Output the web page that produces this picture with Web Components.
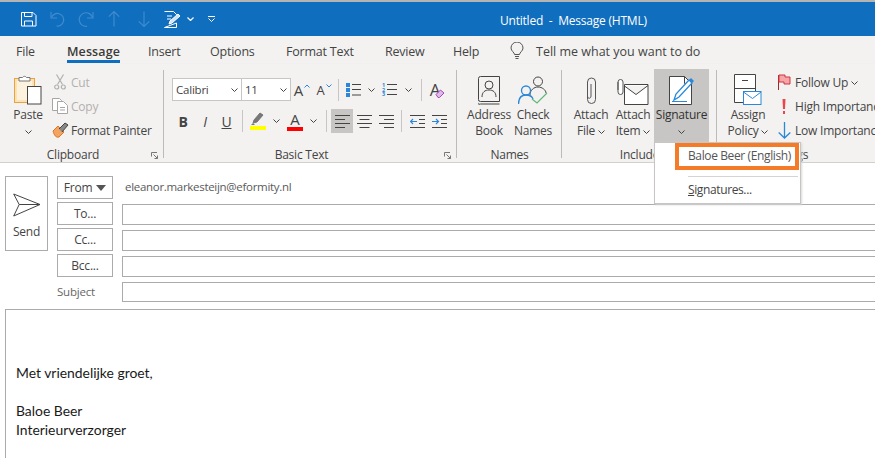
<!DOCTYPE html>
<html>
<head>
<meta charset="utf-8">
<title>Untitled - Message (HTML)</title>
<style>
  html, body { margin: 0; height: 100%; background: #fff; overflow: hidden; }
  body { font: 12px "Open Sans", "Noto Sans", sans-serif; color: #444; letter-spacing: -.22px; }
</style>
</head>
<body>
<ol-app>
  <ol-titlebar slot="top">Untitled&nbsp; -&nbsp; Message (HTML)</ol-titlebar>
  <ol-tabs slot="top">
    <ol-tab style="width:51px">File</ol-tab>
    <ol-tab style="width:81px" active>Message</ol-tab>
    <ol-tab style="width:62px">Insert</ol-tab>
    <ol-tab style="width:76px">Options</ol-tab>
    <ol-tab style="width:99px">Format Text</ol-tab>
    <ol-tab style="width:68px">Review</ol-tab>
    <ol-tab style="width:57px">Help</ol-tab>
    <ol-icon name="bulb" style="margin:3px 12px 0 0"></ol-icon>
    <span style="padding-top:3px;letter-spacing:0">Tell me what you want to do</span>
  </ol-tabs>

  <ol-ribbon slot="top">
    <ol-group label="Clipboard" launcher style="width:164px">
      <div style="display:flex;padding-left:8px">
        <ol-big style="width:40px" chevron>
          <ol-icon slot="icon" name="paste"></ol-icon>
          Paste
        </ol-big>
        <div style="margin:1px 0 0 4px">
          <ol-small dim><ol-icon slot="icon" name="cut"></ol-icon>Cut</ol-small>
          <ol-small dim><ol-icon slot="icon" name="copy"></ol-icon>Copy</ol-small>
          <ol-small><ol-icon slot="icon" name="painter"></ol-icon>Format Painter</ol-small>
        </div>
      </div>
    </ol-group>

    <ol-group label="Basic Text" launcher style="width:293px">
      <div style="padding:9px 0 0 8px">
        <div style="display:flex;height:23px;align-items:center">
          <ol-combo style="width:70px">Calibri</ol-combo>
          <ol-combo style="width:50px;margin-left:-1px">11</ol-combo>
          <ol-tool style="width:22px"><span style="font-size:15px">A</span><ol-icon name="caretup" style="margin:-8px 0 0 1px"></ol-icon></ol-tool>
          <ol-tool style="width:22px"><span style="font-size:13px">A</span><ol-icon name="caretdown" style="margin:-8px 0 0 1px"></ol-icon></ol-tool>
          <ol-sep style="margin:0 4px 0 3px"></ol-sep>
          <ol-tool style="width:21px"><ol-icon name="bullets"></ol-icon></ol-tool>
          <ol-tool style="width:15px"><ol-icon name="chev"></ol-icon></ol-tool>
          <ol-tool style="width:21px"><ol-icon name="numbers"></ol-icon></ol-tool>
          <ol-tool style="width:16px"><ol-icon name="chev"></ol-icon></ol-tool>
          <ol-sep style="margin:0 3px 0 5px"></ol-sep>
          <ol-tool style="width:25px"><span style="font-size:17px;line-height:20px">A</span><ol-icon name="eraser" style="margin:7px 0 0 -5px"></ol-icon></ol-tool>
        </div>
        <div style="display:flex;height:24px;align-items:center;margin-top:8px">
          <ol-tool style="width:22px"><b style="font-size:14px">B</b></ol-tool>
          <ol-tool style="width:22px"><i style="font-size:14px">I</i></ol-tool>
          <ol-tool style="width:21px"><u style="font-size:14px">U</u></ol-tool>
          <ol-sep style="margin:0 2px 0 5px"></ol-sep>
          <ol-tool style="width:26px"><ol-icon name="marker"></ol-icon></ol-tool>
          <ol-tool style="width:11px"><ol-icon name="chev"></ol-icon></ol-tool>
          <ol-tool style="width:26px"><ol-bar>A</ol-bar></ol-tool>
          <ol-tool style="width:11px"><ol-icon name="chev"></ol-icon></ol-tool>
          <ol-sep style="margin:0 4px 0 7px"></ol-sep>
          <ol-tool style="width:22px" active><ol-icon name="left"></ol-icon></ol-tool>
          <ol-tool style="width:22px"><ol-icon name="center"></ol-icon></ol-tool>
          <ol-tool style="width:22px"><ol-icon name="right"></ol-icon></ol-tool>
          <ol-sep style="margin:0 4px"></ol-sep>
          <ol-tool style="width:22px"><ol-icon name="outdent"></ol-icon></ol-tool>
          <ol-tool style="width:22px"><ol-icon name="indent"></ol-icon></ol-tool>
        </div>
      </div>
    </ol-group>

    <ol-group label="Names" style="width:105px">
      <div style="display:flex;padding-left:10px">
        <ol-big style="width:44px"><ol-icon slot="icon" name="book"></ol-icon>Address<br>Book</ol-big>
        <ol-big style="width:44px"><ol-icon slot="icon" name="check"></ol-icon>Check<br>Names</ol-big>
      </div>
    </ol-group>

    <ol-group label="Include" style="width:155px">
      <div style="display:flex;padding-left:8px">
        <ol-big style="width:42px"><ol-icon slot="icon" name="clip"></ol-icon>Attach<br>File <ol-icon name="chev"></ol-icon></ol-big>
        <ol-big style="width:42px"><ol-icon slot="icon" name="item"></ol-icon>Attach<br>Item <ol-icon name="chev"></ol-icon></ol-big>
        <ol-big style="width:55px" active chevron><ol-icon slot="icon" name="signature"></ol-icon>Signature</ol-big>
      </div>
    </ol-group>

    <ol-group label="Tags" style="width:158px" open>
      <div style="display:flex;padding-left:6px">
        <ol-big style="width:50px"><ol-icon slot="icon" name="policy"></ol-icon>Assign<br>Policy <ol-icon name="chev"></ol-icon></ol-big>
        <div style="margin:1px 0 0 3px;white-space:nowrap">
          <ol-small><ol-icon slot="icon" name="flag"></ol-icon>Follow Up <ol-icon name="chev"></ol-icon></ol-small>
          <ol-small><ol-icon slot="icon" name="high"></ol-icon>High Importance</ol-small>
          <ol-small><ol-icon slot="icon" name="low"></ol-icon>Low Importance</ol-small>
        </div>
      </div>
    </ol-group>
  </ol-ribbon>

  <ol-menu slot="top"></ol-menu>

  <ol-compose>
    <ol-row kind="from">eleanor.markesteijn@eformity.nl</ol-row>
    <ol-row kind="field">To...</ol-row>
    <ol-row kind="field">Cc...</ol-row>
    <ol-row kind="field">Bcc...</ol-row>
    <ol-row kind="subject">Subject</ol-row>
    <div slot="body"><br><br>Met vriendelijke groet,<br><br>Baloe Beer<br>Interieurverzorger</div>
  </ol-compose>
</ol-app>

<script>
const dim = '#3f8bce'
const blue = '#2b88d8'

// every icon is [width, height, svg content]
const ICONS = {
  chev: [7, 4, `<path d="M.5.5l3 3 3-3" fill="none" stroke="#444"/>`],
  save: [17, 16, `<g fill="none" stroke="#fff"><path d="M1.5 1.5h11.5l3 3v10.500h-14.500z"/><path d="M4.500 1.500v4h7.500v-4M4.500 15v-5h8v5"/></g>`],
  undo: [15, 16, `<g fill="none" stroke="${dim}" stroke-width="1.200"><path d="M1 1v6h6"/><path d="M1.500 6.500a6.300 6.300 0 1 1 5 8.500"/></g>`],
  redo: [16, 16, `<g fill="none" stroke="${dim}" stroke-width="1.200"><path d="M15 1v6h-6"/><path d="M14.500 6.500a6.800 6.800 0 1 0-5.500 8.800"/></g>`],
  up: [12, 16, `<path d="M6 15.500v-15M.8 5.700L6 .5l5.200 5.200" fill="none" stroke="${dim}" stroke-width="1.200"/>`],
  down: [12, 16, `<path d="M6 .5v15M.8 10.300L6 15.500l5.200-5.200" fill="none" stroke="${dim}" stroke-width="1.200"/>`],
  form: [17, 17, `<path d="M.5.500h9l3 3v1M12.500 12v4.500h-12z" fill="none" stroke="#fff"/><path d="M3 5h5M3 8h4" stroke="#fff"/><path d="M5 13l1-3 8-7 2 2-8 7z" fill="#cfe2f3" stroke="#fff"/>`],
  chevw: [7, 4, `<path d="M.5.5l3 3 3-3" fill="none" stroke="#fff" stroke-width="1.200"/>`],
  more: [7, 6, `<path d="M0 .5h7M.5 2.500l3 3 3-3" fill="none" stroke="#fff"/>`],
  bulb: [14, 19, `<g fill="none" stroke="#555"><path d="M4.500 12.500c0-2-3.500-3.500-3.500-6.500a6 6 0 0 1 12 0c0 3-3.500 4.500-3.500 6.500z"/><path d="M5 14.500h4M5.500 16.500h3"/></g>`],
  paste: [28, 31, `<rect x=".5" y="4.500" width="20" height="24" fill="#fbe3b7" stroke="#e8a33d"/><rect x="3" y="7" width="15" height="19" fill="#fdf2dd"/><path d="M5 7V3.500h3.500a2.300 2.300 0 0 1 4 0H16V7z" fill="#fff" stroke="#777"/><rect x="13.500" y="12.500" width="13.500" height="17.500" fill="#fff" stroke="#444"/>`],
  cut: [12, 16, `<g fill="none" stroke="#b3b0ad" stroke-width="1.200"><path d="M2.500 .5l6 10M9.500 .5l-6 10"/><circle cx="2.700" cy="13" r="2"/><circle cx="9.300" cy="13" r="2"/></g>`],
  copy: [16, 16, `<g fill="#fff" stroke="#a8a6a4"><path d="M.5.500h7l2 2v10h-9z"/><path d="M5.500 3.500h6l4 4v8h-10z"/><path d="M8 9.500h5M8 12h5"/></g>`],
  painter: [17, 16, `<path d="M1 9l5-5 6 6-5 5c-3 1-5-2-6-6z" fill="#f4a460" stroke="#d9782d"/><path d="M7 7l6-6 3 2-6 7" fill="#888" stroke="#444"/>`],
  caretup: [6, 4, `<path d="M.5 3.500l2.500-2.500 2.500 2.500" fill="none" stroke="${blue}"/>`],
  caretdown: [6, 4, `<path d="M.5.5l2.500 2.500 2.500-2.500" fill="none" stroke="${blue}"/>`],
  bullets: [15, 14, `<path d="M0 0h4v4H0zM0 5h4v4H0zM0 10h4v4H0z" fill="${blue}"/><path d="M6 1.500h9M6 6.500h9M6 12h9" stroke="#444"/>`],
  numbers: [15, 16, `<text font-family="Open Sans" font-size="5.500" font-weight="700" fill="${blue}"><tspan x="0" y="5">1</tspan><tspan x="0" y="9.500">2</tspan><tspan x="0" y="14">3</tspan></text><path d="M5 2.500h10M5 7.500h10M5 12.500h10" stroke="#444"/>`],
  eraser: [10, 9, `<path d="M1 5.500l4.500-4.500 3.500 3-4.500 4.500h-1.500z" fill="#e2b7ea" stroke="#a14bb5"/>`],
  marker: [16, 19, `<path d="M3 11l1-3 6-7 3 2-6 7z" fill="#777" stroke="#777"/><path d="M3 11l-2 2h4z" fill="#777"/><rect y="14" width="16" height="4" fill="#ff0"/>`],
  left: [15, 13, `<path d="M0 .5h15M0 4.500h10M0 8.500h15M0 12.500h10" stroke="#444"/>`],
  center: [15, 13, `<path d="M0 .5h15M2.500 4.500h10M0 8.500h15M2.500 12.500h10" stroke="#444"/>`],
  right: [15, 13, `<path d="M0 .5h15M5 4.500h10M0 8.500h15M5 12.500h10" stroke="#444"/>`],
  outdent: [15, 13, `<path d="M0 .5h15M9 4.500h6M9 8.500h6M0 12.500h15" stroke="#444"/><path d="M7 6.500H.5M3 4l-2.500 2.500L3 9" fill="none" stroke="${blue}" stroke-width="1.200"/>`],
  indent: [15, 13, `<path d="M0 .5h15M9 4.500h6M9 8.500h6M0 12.500h15" stroke="#444"/><path d="M0 6.500h6.500M4 4l2.500 2.500L4 9" fill="none" stroke="${blue}" stroke-width="1.200"/>`],
  launcher: [7, 7, `<path d="M.5 4.500V.5h5.500M2.500 2.500l4 4M6.500 3.500v3H3.500" fill="none" stroke="#777"/>`],
  book: [22, 29, `<g fill="none" stroke="#444"><path d="M2.500.5h19v25h-19a2 2 0 0 1-2-2v-21a2 2 0 0 1 2-2z"/><path d="M.5 24.500a2 2 0 0 0 2 3.500h19"/><circle cx="11" cy="9" r="4"/><path d="M4 21c0-5 3-7 7-7s7 2 7 7"/></g>`],
  check: [30, 29, `<g fill="none"><circle cx="20" cy="5.500" r="4.500" stroke="#444"/><path d="M12 19c0-5 4-8 8-8s8 3 8 6" stroke="#444"/><circle cx="8" cy="14.500" r="4.500" stroke="${blue}" stroke-width="1.300"/><path d="M.5 28c0-6 3-9 7.500-9s6 1 7 4" stroke="${blue}" stroke-width="1.300"/><path d="M14 23l5 4 10-10" stroke="#5fb878" stroke-width="1.200"/></g>`],
  clip: [12, 28, `<path d="M2.500 7v15.500a4 4 0 0 0 8 0V5a4 4 0 0 0-8 0v14c0 3 3.500 3 3.500 0V7" fill="none" stroke="#555"/>`],
  item: [32, 26, `<path d="M7.500 5.500h23.500v20H7.500zM7.500 7L19 15.500 31 6.500" fill="#fff" stroke="#444"/><path d="M1 3v10a2.500 2.500 0 0 0 5 0V3a2.500 2.500 0 0 0-5 0v8" fill="#fff" stroke="#555"/>`],
  signature: [26, 29, `<path d="M.5.500h15l7 7v21h-22z" fill="#fff" stroke="#444"/><path d="M15.500.5v7h7" fill="none" stroke="#444"/><path d="M5 24l2-6L20 4l3 3L10 21z" fill="#fff" stroke="${blue}" stroke-width="1.300"/><path d="M20 4l2-2 3 3-2 2z" fill="${blue}"/><path d="M3 25.500h15" stroke="${blue}"/>`],
  policy: [28, 31, `<path d="M.5.500h21v28H.5zM.5 14.500h21" fill="#fff" stroke="#444"/><path d="M8 6.500h6" stroke="#444"/><rect x="9.500" y="17.500" width="17.500" height="13" fill="#fff" stroke="${blue}"/><path d="M9.500 18l9 6.500 8.500-6.500" fill="none" stroke="${blue}"/>`],
  flag: [13, 16, `<path d="M.5 16V1" stroke="#a4262c"/><path d="M1 1h6v2h5v7H6V8H1z" fill="#f4a6ab" stroke="#d13438"/>`],
  high: [4, 15, `<path d="M.5 0h3l-.5 10H1z" fill="#e8474c"/><rect x="1" y="12" width="2" height="3" fill="#e8474c"/>`],
  low: [13, 17, `<path d="M6.500 0v16M.7 10.500L6.500 16l5.800-5.500" fill="none" stroke="${blue}" stroke-width="1.300"/>`],
  send: [28, 24, `<path d="M.7 1L27 11.500.7 23l5.500-11.500zM6.200 11.500H27" fill="none" stroke="#444"/>`]
}

window.customElements.define('ol-icon',
  class OlIcon extends HTMLElement {
    constructor() {
      super()
      this.attachShadow({ mode: "open" })
    }

    connectedCallback() {
      const [w, h, body] = ICONS[this.getAttribute('name')]
      this.shadowRoot.innerHTML = `
        <style>
          :host { display: inline-block; line-height: 0; flex: none; vertical-align: middle; }
          svg { display: block; }
        </style>
        <svg width="${w}" height="${h}" viewBox="0 0 ${w} ${h}">${body}</svg>`
    }
  }
)

window.customElements.define('ol-app',
  class OlApp extends HTMLElement {
    constructor() {
      super()
      this.attachShadow({ mode: "open" })
      this.shadowRoot.innerHTML = `
        <style>
          :host { display: flex; flex-direction: column; position: relative; width: 875px; height: 458px; overflow: hidden; }
          .strip { height: 2px; background: #b4b4b4; flex: none; }
        </style>
        <div class="strip"></div>
        <slot name="top"></slot>
        <slot></slot>`
    }
  }
)

window.customElements.define('ol-titlebar',
  class OlTitlebar extends HTMLElement {
    constructor() {
      super()
      this.attachShadow({ mode: "open" })
      this.shadowRoot.innerHTML = `
        <style>
          :host { display: flex; align-items: center; height: 34px; background: #106ebe; color: #fff; position: relative; flex: none; }
          .qat { display: flex; align-items: center; padding-left: 20px; }
          .title { position: absolute; left: 500px; top: 0; line-height: 37px; white-space: nowrap; }
        </style>
        <div class="qat">
          <ol-icon name="save"></ol-icon>
          <ol-icon name="undo" style="margin-left:13px"></ol-icon>
          <ol-icon name="redo" style="margin-left:13px"></ol-icon>
          <ol-icon name="up" style="margin-left:14px"></ol-icon>
          <ol-icon name="down" style="margin-left:18px"></ol-icon>
          <ol-icon name="form" style="margin-left:14px"></ol-icon>
          <ol-icon name="chevw" style="margin-left:6px"></ol-icon>
          <ol-icon name="more" style="margin-left:14px"></ol-icon>
        </div>
        <div class="title"><slot></slot></div>`
    }
  }
)

window.customElements.define('ol-tabs',
  class OlTabs extends HTMLElement {
    constructor() {
      super()
      this.attachShadow({ mode: "open" })
      this.shadowRoot.innerHTML = `
        <style>
          :host { display: flex; align-items: center; height: 28px; padding-left: 16px; background: #f3f2f1; white-space: nowrap; font-size: 12.500px; flex: none; }
        </style>
        <slot></slot>`
    }
  }
)

window.customElements.define('ol-tab',
  class OlTab extends HTMLElement {
    constructor() {
      super()
      this.attachShadow({ mode: "open" })
      this.shadowRoot.innerHTML = `
        <style>
          :host { display: block; flex: none; line-height: 31px; height: 28px; }
          span { display: inline-block; height: 27px; }
          :host([active]) { font-weight: 600; color: #3b3a39; letter-spacing: .1px; }
          :host([active]) span { box-shadow: inset 0 -3px 0 #106ebe; }
        </style>
        <span><slot></slot></span>`
    }
  }
)

window.customElements.define('ol-ribbon',
  class OlRibbon extends HTMLElement {
    constructor() {
      super()
      this.attachShadow({ mode: "open" })
      this.shadowRoot.innerHTML = `
        <style>
          :host { display: flex; height: 98px; background: #f3f2f1; border-bottom: 1px solid #d2d0ce; box-shadow: 0 1px 2px #e4e4e4; flex: none; }
        </style>
        <slot></slot>`
    }
  }
)

window.customElements.define('ol-group',
  class OlGroup extends HTMLElement {
    constructor() {
      super()
      this.attachShadow({ mode: "open" })
      this.shadowRoot.innerHTML = `
        <style>
          :host { display: flex; flex-direction: column; flex: none; position: relative; height: 98px; box-sizing: border-box; padding-top: 5px; }
          .sep { position: absolute; right: 0; top: 6px; bottom: 4px; width: 1px; background: #bdbbb9; }
          :host([open]) .sep { display: none; }
          .body { flex: 1; min-height: 0; }
          .label { height: 18px; line-height: 21px; text-align: center; position: relative; }
          :host([launcher]) .label { padding-right: 18px; }
          .launch { position: absolute; right: 6px; top: 8px; display: none; }
          :host([launcher]) .launch { display: block; }
        </style>
        <div class="sep"></div>
        <div class="body"><slot></slot></div>
        <div class="label">${this.getAttribute('label')}<ol-icon class="launch" name="launcher"></ol-icon></div>`
    }
  }
)

window.customElements.define('ol-big',
  class OlBig extends HTMLElement {
    constructor() {
      super()
      this.attachShadow({ mode: "open" })
      this.shadowRoot.innerHTML = `
        <style>
          :host { display: flex; flex-direction: column; align-items: center; flex: none; height: 74px; text-align: center; line-height: 16px; white-space: nowrap; }
          :host([active]) { background: #c8c6c4; color: #323130; }
          .icon { height: 38px; display: flex; align-items: flex-end; justify-content: center; padding-bottom: 2px; box-sizing: border-box; }
          .chev { display: none; height: 16px; }
          :host([chevron]) .chev { display: block; }
        </style>
        <div class="icon"><slot name="icon"></slot></div>
        <div><slot></slot></div>
        <div class="chev"><ol-icon name="chev"></ol-icon></div>`
    }
  }
)

window.customElements.define('ol-small',
  class OlSmall extends HTMLElement {
    constructor() {
      super()
      this.attachShadow({ mode: "open" })
      this.shadowRoot.innerHTML = `
        <style>
          :host { display: flex; align-items: center; height: 24px; white-space: nowrap; }
          :host([dim]) { color: #b3b0ad; }
          .icon { width: 19px; display: flex; justify-content: center; padding-right: 3px; box-sizing: border-box; }
        </style>
        <div class="icon"><slot name="icon"></slot></div>
        <div><slot></slot></div>`
    }
  }
)

window.customElements.define('ol-combo',
  class OlCombo extends HTMLElement {
    constructor() {
      super()
      this.attachShadow({ mode: "open" })
      this.shadowRoot.innerHTML = `
        <style>
          :host { display: flex; align-items: center; justify-content: space-between; box-sizing: border-box; height: 23px; flex: none; padding: 0 3px; background: #fff; border: 1px solid #c8c6c4; font-size: 11.500px; }
        </style>
        <span><slot></slot></span>
        <ol-icon name="chev"></ol-icon>`
    }
  }
)

window.customElements.define('ol-tool',
  class OlTool extends HTMLElement {
    constructor() {
      super()
      this.attachShadow({ mode: "open" })
      this.shadowRoot.innerHTML = `
        <style>
          :host { display: flex; align-items: center; justify-content: center; align-self: stretch; flex: none; }
          :host([active]) { background: #c8c6c4; }
        </style>
        <slot></slot>`
    }
  }
)

// the font colour button: a letter over a red bar
window.customElements.define('ol-bar',
  class OlBar extends HTMLElement {
    constructor() {
      super()
      this.attachShadow({ mode: "open" })
      this.shadowRoot.innerHTML = `
        <style>
          :host { display: block; width: 16px; text-align: center; font-size: 15px; line-height: 14px; }
          div { height: 4px; margin-top: 1px; background: #f00; }
        </style>
        <slot></slot><div></div>`
    }
  }
)

window.customElements.define('ol-sep',
  class OlSep extends HTMLElement {
    constructor() {
      super()
      this.attachShadow({ mode: "open" })
      this.shadowRoot.innerHTML = `
        <style>
          :host { display: block; width: 1px; height: 22px; background: #c8c6c4; flex: none; }
        </style>`
    }
  }
)

window.customElements.define('ol-menu',
  class OlMenu extends HTMLElement {
    constructor() {
      super()
      this.attachShadow({ mode: "open" })
      this.shadowRoot.innerHTML = `
        <style>
          :host { display: block; position: absolute; left: 654px; top: 142px; width: 147px; height: 62px; box-sizing: border-box; background: #fff; border: 1px solid #c8c6c4; box-shadow: 1px 1px 2px #d8d8d8; z-index: 5; letter-spacing: -.38px; }
          .item { position: absolute; left: 33px; white-space: nowrap; line-height: 16px; }
          .pick { top: 5px; color: #555; }
          .line { position: absolute; left: 33px; right: 2px; top: 33px; height: 1px; background: #d6d4d2; }
          .more { top: 39px; }
          .mark { position: absolute; left: 20px; top: 0; width: 124px; height: 27px; box-sizing: border-box; border: 4px solid #f47b28; }
        </style>
        <div class="item pick">Baloe Beer (English)</div>
        <div class="line"></div>
        <div class="item more"><u>S</u>ignatures...</div>
        <div class="mark"></div>`
    }
  }
)

window.customElements.define('ol-compose',
  class OlCompose extends HTMLElement {
    constructor() {
      super()
      this.attachShadow({ mode: "open" })
      this.shadowRoot.innerHTML = `
        <style>
          :host { display: flex; flex-direction: column; flex: 1; min-height: 0; background: #fff; padding: 13px 0 0 5px; }
          .head { display: flex; gap: 9px; }
          .send { width: 43px; height: 75px; box-sizing: border-box; border: 1px solid #ababab; display: flex; flex-direction: column; align-items: center; padding-top: 16px; flex: none; }
          .send span { margin-top: 8px; line-height: 14px; }
          .rows { flex: 1; display: flex; flex-direction: column; gap: 3px; }
          .body { flex: 1; margin-top: 7px; border: 1px solid #ababab; border-width: 1px 0 0 1px; padding: 15px 10px; font: 13.900px/19px Lato, "Liberation Sans", sans-serif; letter-spacing: 0; color: #1a1a1a; }
        </style>
        <div class="head">
          <div class="send"><ol-icon name="send"></ol-icon><span>Send</span></div>
          <div class="rows"><slot></slot></div>
        </div>
        <div class="body"><slot name="body"></slot></div>`
    }
  }
)

window.customElements.define('ol-row',
  class OlRow extends HTMLElement {
    constructor() {
      super()
      this.attachShadow({ mode: "open" })
      const kind = this.getAttribute('kind')
      let cells = ''
      if (kind == 'from') {
        cells = `<div class="btn">From <svg width="10" height="6" style="margin-left:4px"><path d="M0 0h10L5 6z" fill="#555"/></svg></div><div class="addr"><slot></slot></div>`
      } else if (kind == 'field') {
        cells = `<div class="btn"><slot></slot></div><div class="input"></div>`
      } else {
        cells = `<div class="lbl"><slot></slot></div><div class="input"></div>`
      }
      this.shadowRoot.innerHTML = `
        <style>
          :host { display: grid; grid-template-columns: 56px 1fr; column-gap: 9px; height: 23px; }
          :host([kind=subject]) { height: 20px; margin-top: 2px; }
          .btn { box-sizing: border-box; border: 1px solid #ababab; display: flex; align-items: center; justify-content: center; }
          .addr { line-height: 22px; padding-left: 3px; color: #5a5a5a; font-size: 11.500px; letter-spacing: -.3px; }
          .input { box-sizing: border-box; height: 21px; align-self: end; border: 1px solid #ababab; border-right: 0; }
          :host([kind=subject]) .input { height: 20px; }
          .lbl { line-height: 20px; color: #666; font-size: 11.500px; }
        </style>
        ${cells}`
    }
  }
)
</script>
</body>
</html>
